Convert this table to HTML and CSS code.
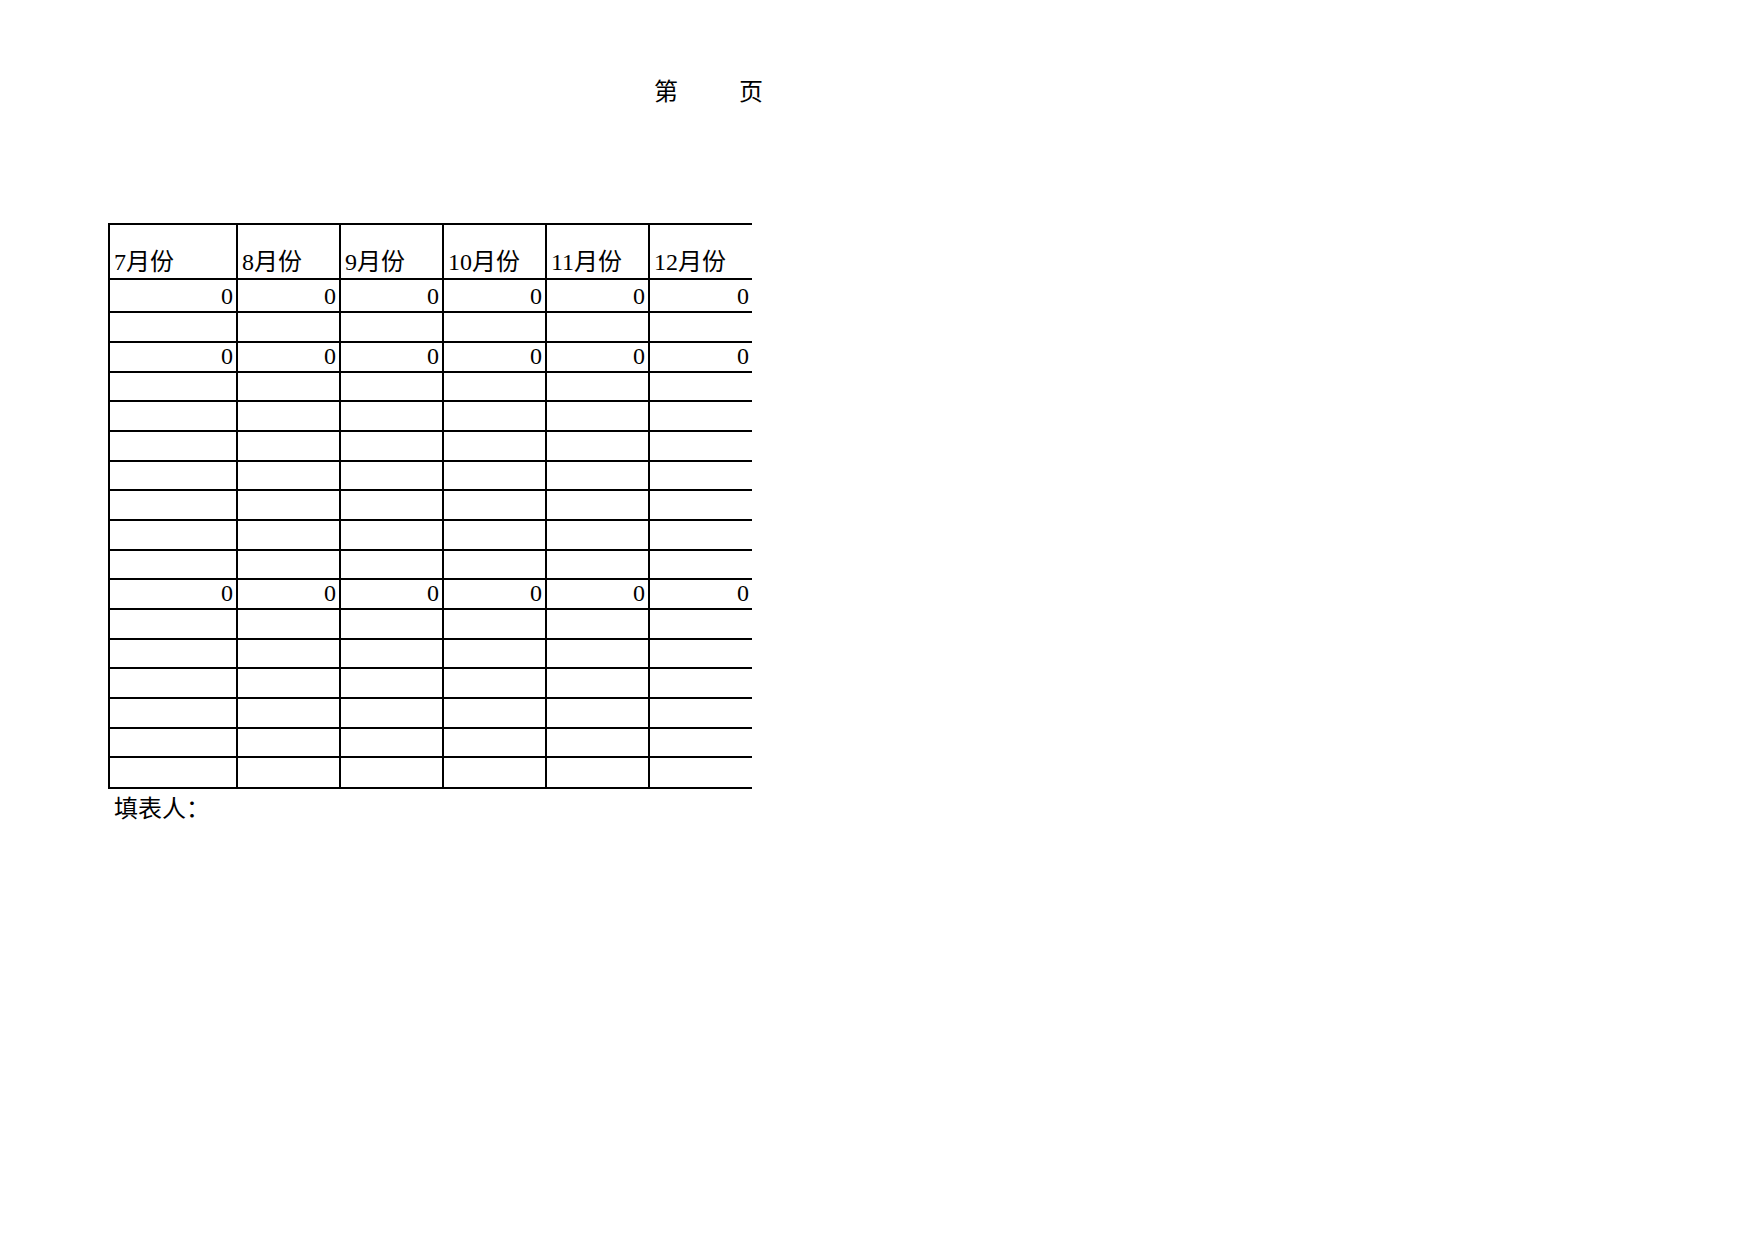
FILE: index.html
```html
<!DOCTYPE html>
<html lang="zh-CN">
<head>
<meta charset="utf-8">
<title>第 页</title>
<link rel="stylesheet" href="styles.css">
</head>
<body>
<div class="sheet">
  <div class="title"><span>第</span><span>页</span></div>
  <table class="grid">
    <colgroup>
      <col class="c1"><col class="cn"><col class="cn"><col class="cn"><col class="cn"><col class="clast">
    </colgroup>
    <thead>
      <tr class="head">
        <th>7月份</th><th>8月份</th><th>9月份</th><th>10月份</th><th>11月份</th><th>12月份</th>
      </tr>
    </thead>
    <tbody>
      <tr class="first"><td>0</td><td>0</td><td>0</td><td>0</td><td>0</td><td>0</td></tr>
      <tr><td></td><td></td><td></td><td></td><td></td><td></td></tr>
      <tr><td>0</td><td>0</td><td>0</td><td>0</td><td>0</td><td>0</td></tr>
      <tr><td></td><td></td><td></td><td></td><td></td><td></td></tr>
      <tr><td></td><td></td><td></td><td></td><td></td><td></td></tr>
      <tr><td></td><td></td><td></td><td></td><td></td><td></td></tr>
      <tr><td></td><td></td><td></td><td></td><td></td><td></td></tr>
      <tr><td></td><td></td><td></td><td></td><td></td><td></td></tr>
      <tr><td></td><td></td><td></td><td></td><td></td><td></td></tr>
      <tr><td></td><td></td><td></td><td></td><td></td><td></td></tr>
      <tr><td>0</td><td>0</td><td>0</td><td>0</td><td>0</td><td>0</td></tr>
      <tr><td></td><td></td><td></td><td></td><td></td><td></td></tr>
      <tr><td></td><td></td><td></td><td></td><td></td><td></td></tr>
      <tr><td></td><td></td><td></td><td></td><td></td><td></td></tr>
      <tr><td></td><td></td><td></td><td></td><td></td><td></td></tr>
      <tr><td></td><td></td><td></td><td></td><td></td><td></td></tr>
      <tr class="last"><td></td><td></td><td></td><td></td><td></td><td></td></tr>
    </tbody>
  </table>
  <div class="filler">填表人：</div>
</div>
</body>
</html>
```

FILE: styles.css
```css
html, body {
  margin: 0;
  padding: 0;
  background: #ffffff;
}

body {
  font-family: "Liberation Serif", "Noto Sans CJK SC", serif;
  font-size: 24px;
  color: #000000;
}

.sheet {
  width: 1754px;
  min-height: 1240px;
}

.title {
  display: flex;
  gap: 61px;
  padding: 77px 0 0 654px;
  line-height: 30px;
}

.grid {
  margin: 116px 0 0 108px;
  border-collapse: separate;
  border-spacing: 0;
  table-layout: fixed;
  width: 644px;
  border-bottom: 2px solid #000;
}

.c1 { width: 128px; }
.cn { width: 103px; }
.clast { width: 104px; }

.grid th,
.grid td {
  box-sizing: border-box;
  border-top: 2px solid #000;
  border-left: 2px solid #000;
  padding: 0;
  vertical-align: bottom;
  line-height: 26px;
  font-weight: normal;
  white-space: nowrap;
  overflow: hidden;
}

.grid th {
  text-align: left;
  padding-left: 4px;
  padding-bottom: 3px;
}

.grid td {
  text-align: right;
  padding-right: 3px;
  padding-bottom: 2px;
}

.head { height: 55px; }
.grid tbody tr { height: 30px; }
.grid tbody tr:nth-child(3n+4) { height: 29px; }
.grid tbody tr.first { height: 33px; }
.grid tbody tr.last { height: 31px; }

.filler {
  margin: 5px 0 0 114px;
  line-height: 30px;
}
```
